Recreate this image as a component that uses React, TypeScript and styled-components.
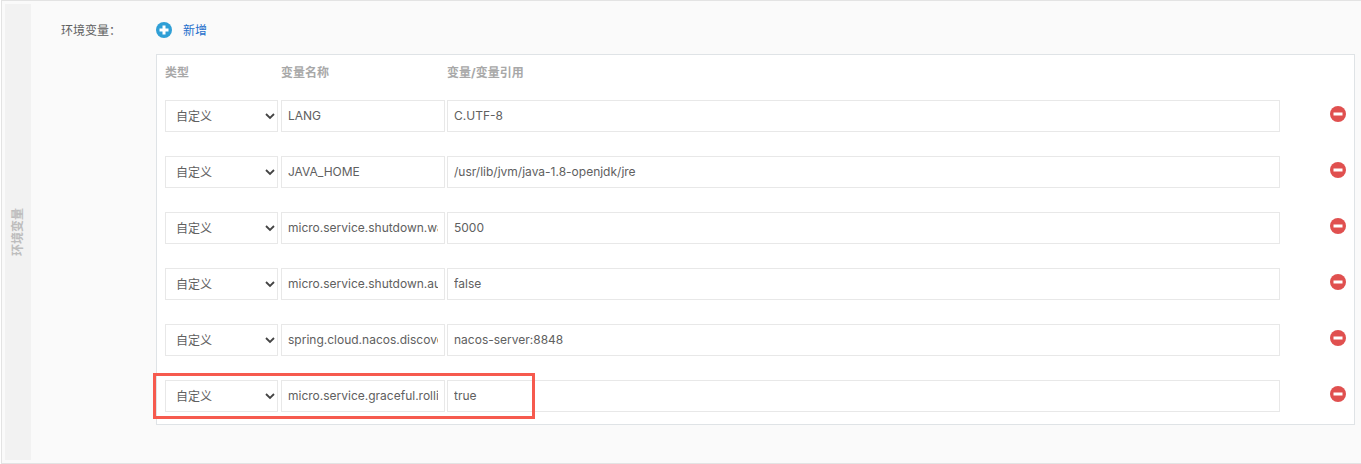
import React from 'react';
import styled, { createGlobalStyle } from 'styled-components';

const GlobalStyle = createGlobalStyle`
  html, body {
    margin: 0;
    padding: 0;
    background: #fff;
    font-family: Inter, "Noto Sans CJK SC", sans-serif;
  }
`;

const Page = styled.div`
  width: 1361px;
  height: 464px;
  box-sizing: border-box;
  padding: 0 0 0 1px;
  overflow: hidden;
`;

const Panel = styled.section`
  height: 464px;
  box-sizing: border-box;
  display: flex;
  background: #fafafa;
  border: 1px solid #e3e3e3;
  border-right: 0;
  padding: 3px 0 3px 3px;
`;

const SideTitle = styled.div`
  width: 26px;
  flex: none;
  box-sizing: border-box;
  padding-right: 3px;
  background: #f2f2f2;
  display: flex;
  align-items: center;
  justify-content: center;
`;

const SideText = styled.span`
  writing-mode: vertical-rl;
  text-orientation: sideways;
  transform: rotate(180deg);
  font-size: 12px;
  font-weight: 700;
  color: #bdbdbd;
`;

const Body = styled.div`
  flex: 1;
  display: flex;
  padding: 0 33px 0 30px;
`;

const FieldLabel = styled.label`
  width: 95px;
  flex: none;
  padding-top: 19px;
  font-size: 12px;
  line-height: 16px;
  color: #606060;
`;

const FieldBody = styled.div`
  flex: 1;
  min-width: 0;
`;

const AddRow = styled.div`
  height: 50px;
  display: flex;
  align-items: center;
  gap: 11px;
  padding-top: 2px;
  box-sizing: border-box;
`;

const AddLink = styled.a`
  font-size: 12px;
  color: #1e6fcc;
  line-height: 16px;
  padding-top: 1px;
`;

const TableBox = styled.div`
  position: relative;
  height: 371px;
  box-sizing: border-box;
  background: #fff;
  border: 1px solid #dfe3e6;
  padding: 0 8px;
`;

const HeaderRow = styled.div`
  height: 45px;
  display: grid;
  grid-template-columns: 116px 166px 1fr;
  align-items: center;
  font-size: 12px;
  font-weight: 700;
  color: #a8a8a8;
  padding-bottom: 13px;
  box-sizing: border-box;
`;

const Rows = styled.div`
  display: flex;
  flex-direction: column;
  gap: 24px;
`;

const Row = styled.div`
  display: flex;
  align-items: center;
  height: 32px;
`;

const Cell = styled.div<{ $width: number }>`
  width: ${p => p.$width}px;
  flex: none;
  margin-right: 2px;
`;

const SelectWrap = styled(Cell)`
  position: relative;
  margin-right: 3px;
`;

const TypeSelect = styled.select`
  appearance: none;
  width: 100%;
  height: 32px;
  box-sizing: border-box;
  border: 1px solid #e8e8e8;
  border-radius: 0;
  background: #fff;
  padding: 0 10px;
  font-family: inherit;
  font-size: 12px;
  color: #606060;
  outline: none;
`;

const Chevron = styled.svg`
  position: absolute;
  right: 3px;
  top: 12px;
  width: 10px;
  height: 8px;
  pointer-events: none;
`;

const TextInput = styled.input`
  display: block;
  width: 100%;
  height: 32px;
  box-sizing: border-box;
  border: 1px solid #e8e8e8;
  border-radius: 0;
  background: #fff;
  padding: 0 6px 2px;
  font-family: inherit;
  font-size: 12px;
  color: #606060;
  outline: none;
`;

const RemoveIcon = styled.svg`
  margin-left: 48px;
  margin-top: -4px;
  width: 16px;
  height: 16px;
  flex: none;
`;

const Highlight = styled.div`
  position: absolute;
  left: -4px;
  top: 318px;
  width: 382px;
  height: 46px;
  box-sizing: border-box;
  border: 3px solid #f65a4e;
  pointer-events: none;
`;

const envRows = [
  { name: 'LANG', value: 'C.UTF-8' },
  { name: 'JAVA_HOME', value: '/usr/lib/jvm/java-1.8-openjdk/jre' },
  { name: 'micro.service.shutdown.wait', value: '5000' },
  { name: 'micro.service.shutdown.auto', value: 'false' },
  { name: 'spring.cloud.nacos.discovery.server', value: 'nacos-server:8848' },
  { name: 'micro.service.graceful.rolling.enable', value: 'true' },
];

export default function App() {
  return (
    <Page>
      <GlobalStyle />
      <Panel>
        <SideTitle>
          <SideText>环境变量</SideText>
        </SideTitle>
        <Body>
          <FieldLabel>环境变量：</FieldLabel>
          <FieldBody>
            <AddRow>
              <svg width="16" height="16" viewBox="0 0 16 16">
                <circle cx="8" cy="8" r="8" fill="#2f9fd6" />
                <rect x="3.5" y="6.5" width="9" height="3" fill="#fff" />
                <rect x="6.5" y="3.5" width="3" height="9" fill="#fff" />
              </svg>
              <AddLink>新增</AddLink>
            </AddRow>
            <TableBox>
              <HeaderRow>
                <span>类型</span>
                <span>变量名称</span>
                <span>变量/变量引用</span>
              </HeaderRow>
              <Rows>
                {envRows.map(row => (
                  <Row key={row.name}>
                    <SelectWrap $width={113}>
                      <TypeSelect defaultValue="custom">
                        <option value="custom">自定义</option>
                      </TypeSelect>
                      <Chevron viewBox="0 0 10 8">
                        <path d="M1 2l4 4 4-4" fill="none" stroke="#444" strokeWidth="1.8" />
                      </Chevron>
                    </SelectWrap>
                    <Cell $width={164}>
                      <TextInput defaultValue={row.name} />
                    </Cell>
                    <Cell $width={833}>
                      <TextInput defaultValue={row.value} />
                    </Cell>
                    <RemoveIcon viewBox="0 0 16 16">
                      <circle cx="8" cy="8" r="8" fill="#e0504f" />
                      <rect x="3.5" y="6.5" width="9" height="3" fill="#fff" />
                    </RemoveIcon>
                  </Row>
                ))}
              </Rows>
              <Highlight />
            </TableBox>
          </FieldBody>
        </Body>
      </Panel>
    </Page>
  );
}
